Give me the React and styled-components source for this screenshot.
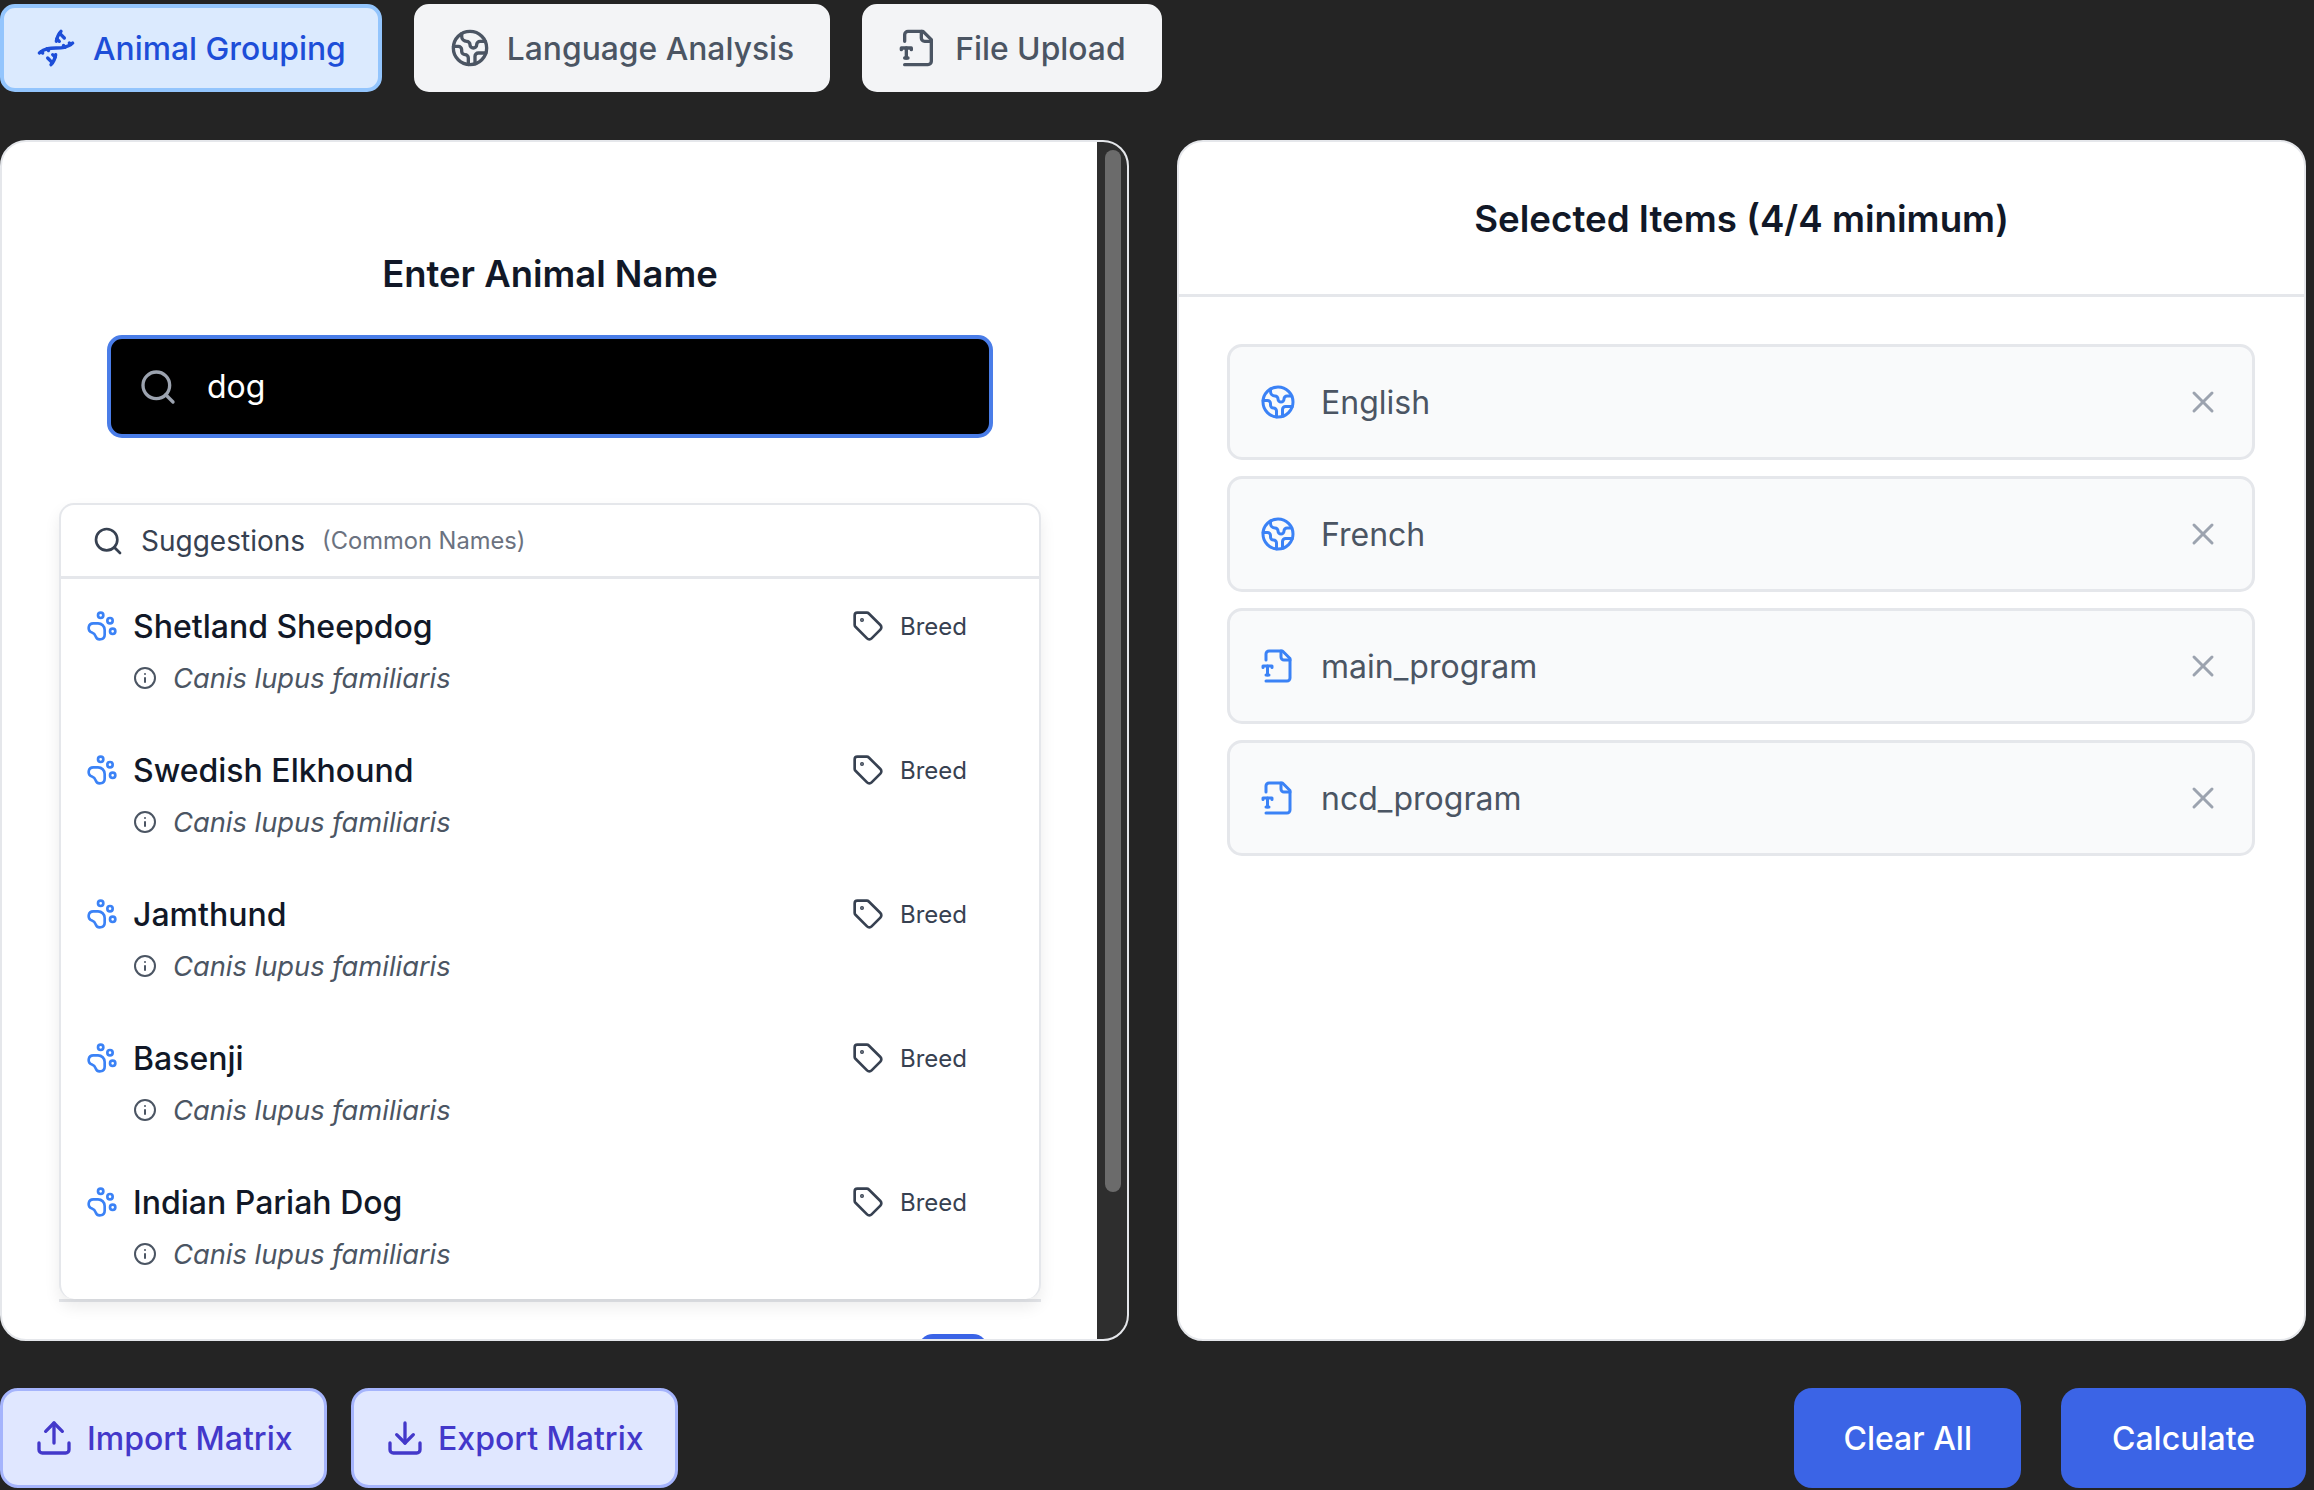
import React from "react";
import styled, { createGlobalStyle } from "styled-components";
import {
  Dna,
  Earth,
  Search,
  PawPrint,
  Info,
  Tag,
  X,
  Upload,
  Download,
} from "lucide-react";

const FileTypeIcon = ({ size = 24, color = "currentColor" }) => (
  <svg
    width={size}
    height={size}
    viewBox="0 0 24 24"
    fill="none"
    stroke={color}
    strokeWidth="2"
    strokeLinecap="round"
    strokeLinejoin="round"
  >
    <path d="M4 22h14a2 2 0 0 0 2-2V7l-5-5H6a2 2 0 0 0-2 2v4" />
    <path d="M14 2v4a2 2 0 0 0 2 2h4" />
    <path d="M2 13v-1h6v1" />
    <path d="M5 12v6" />
    <path d="M4 18h2" />
  </svg>
);

const suggestions = [
  "Shetland Sheepdog",
  "Swedish Elkhound",
  "Jamthund",
  "Basenji",
  "Indian Pariah Dog",
];

const selected = [
  { name: "English", Icon: Earth },
  { name: "French", Icon: Earth },
  { name: "main_program", Icon: FileTypeIcon },
  { name: "ncd_program", Icon: FileTypeIcon },
];

export default function App() {
  return (
    <Page>
      <GlobalStyle />
      <Tabs>
        <Tab $active>
          <Dna size={40} strokeWidth={2} />
          Animal Grouping
        </Tab>
        <Tab>
          <Earth size={40} strokeWidth={2} />
          Language Analysis
        </Tab>
        <Tab>
          <FileTypeIcon size={40} />
          File Upload
        </Tab>
      </Tabs>

      <Panels>
        <LeftPanel>
          <ScrollArea>
            <SearchTitle>Enter Animal Name</SearchTitle>
            <SearchBox>
              <Search size={40} color="#9ca3af" strokeWidth={2} />
              <span>dog</span>
            </SearchBox>
            <CardWrap>
              <Card>
                <CardHeader>
                  <Search size={32} color="#374151" strokeWidth={2} />
                  <span>Suggestions</span>
                  <small>(Common Names)</small>
                </CardHeader>
                {suggestions.map((name) => (
                  <Row key={name}>
                    <RowTop>
                      <RowName>
                        <PawPrint size={32} color="#3b82f6" strokeWidth={2} />
                        {name}
                      </RowName>
                      <RowTag>
                        <Tag size={32} color="#374151" strokeWidth={2} />
                        Breed
                      </RowTag>
                    </RowTop>
                    <RowSub>
                      <Info size={24} color="#4b5563" strokeWidth={2} />
                      <em>Canis lupus familiaris</em>
                    </RowSub>
                  </Row>
                ))}
              </Card>
            </CardWrap>
            <PeekButton />
          </ScrollArea>
          <Track>
            <Thumb />
          </Track>
        </LeftPanel>

        <RightPanel>
          <RightHeader>Selected Items (4/4 minimum)</RightHeader>
          <Items>
            {selected.map(({ name, Icon }) => (
              <Item key={name}>
                <ItemLabel>
                  <Icon size={36} color="#3b82f6" />
                  {name}
                </ItemLabel>
                <X size={36} color="#9ca3af" strokeWidth={2} />
              </Item>
            ))}
          </Items>
        </RightPanel>
      </Panels>

      <Footer>
        <FooterGroup>
          <MatrixButton>
            <Upload size={40} strokeWidth={2} />
            Import Matrix
          </MatrixButton>
          <MatrixButton>
            <Download size={40} strokeWidth={2} />
            Export Matrix
          </MatrixButton>
        </FooterGroup>
        <ActionGroup>
          <ActionButton>Clear All</ActionButton>
          <ActionButton $wide>Calculate</ActionButton>
        </ActionGroup>
      </Footer>
    </Page>
  );
}

const GlobalStyle = createGlobalStyle`
  html, body {
    margin: 0;
    background: #242424;
  }
  * {
    box-sizing: border-box;
  }
`;

const Page = styled.div`
  width: 2314px;
  height: 1490px;
  padding: 4px 8px 0 0;
  background: #242424;
  font-family: Inter, "Liberation Sans", sans-serif;
  overflow: hidden;
`;

const Tabs = styled.div`
  display: flex;
  gap: 32px;
  margin-bottom: 48px;
`;

const Tab = styled.button`
  display: flex;
  align-items: center;
  gap: 17px;
  height: 88px;
  padding: 0 32px;
  border-radius: 15px;
  font-family: inherit;
  font-size: 31.8px;
  font-weight: 500;
  border: 4px solid ${(p) => (p.$active ? "#93c5fd" : "#f3f4f6")};
  background: ${(p) => (p.$active ? "#dbeafe" : "#f3f4f6")};
  color: ${(p) => (p.$active ? "#1d4ed8" : "#4b5563")};
`;

const Panels = styled.div`
  display: grid;
  grid-template-columns: 1129px 1129px;
  gap: 48px;
  height: 1201px;
`;

const LeftPanel = styled.section`
  display: flex;
  border: 2px solid #e5e7eb;
  border-radius: 26px;
  background: #fff;
  overflow: hidden;
`;

const ScrollArea = styled.div`
  flex: 1;
  min-width: 0;
  display: flex;
  flex-direction: column;
  padding: 107px 56px 0 57px;
  overflow: hidden;
`;

const SearchTitle = styled.h2`
  margin: 0 0 36px;
  text-align: center;
  font-size: 36.4px;
  line-height: 50px;
  font-weight: 600;
  color: #111827;
`;

const SearchBox = styled.div`
  display: flex;
  flex: none;
  align-items: center;
  gap: 29px;
  height: 103px;
  margin: 0 48px 65px;
  padding: 0 27px;
  border: 4px solid #4a7de8;
  border-radius: 15px;
  background: #000;
  color: #fff;
  font-size: 32px;
`;

const CardWrap = styled.div`
  flex: none;
  border-bottom: 3px solid #e5e7eb;
`;

const Card = styled.div`
  border: 2px solid #e5e7eb;
  border-bottom: none;
  border-radius: 15px;
  background: #fff;
  box-shadow: 0 8px 16px rgba(0, 0, 0, 0.08);
`;

const CardHeader = styled.div`
  display: flex;
  align-items: center;
  height: 74px;
  padding-left: 31px;
  border-bottom: 3px solid #e5e7eb;
  color: #374151;
  font-size: 28px;

  span {
    margin-left: 17px;
  }

  small {
    margin-left: 17px;
    font-size: 23.7px;
    color: #6b7280;
  }
`;

const Row = styled.div`
  display: flex;
  flex-direction: column;
  gap: 8px;
  height: 144px;
  padding: 25px 72px 0 25px;
`;

const RowTop = styled.div`
  display: flex;
  align-items: center;
  justify-content: space-between;
  height: 44px;
`;

const RowName = styled.div`
  display: flex;
  align-items: center;
  gap: 15px;
  font-size: 32px;
  font-weight: 500;
  color: #111827;
`;

const RowTag = styled.div`
  display: flex;
  align-items: center;
  gap: 16px;
  font-size: 24px;
  color: #374151;
`;

const RowSub = styled.div`
  display: flex;
  align-items: center;
  gap: 16px;
  margin-left: 47px;
  height: 44px;
  font-size: 27.3px;
  color: #4b5563;
`;

const PeekButton = styled.div`
  flex: none;
  align-self: flex-end;
  width: 70px;
  height: 60px;
  margin: 32px 53px 0 0;
  border-radius: 15px;
  background: #3b64e6;
`;

const Track = styled.div`
  flex: none;
  width: 30px;
  padding: 8px 6px 0 8px;
  background: #2e2e2e;
`;

const Thumb = styled.div`
  height: 1042px;
  border-radius: 9px;
  background: #6b6b6b;
`;

const RightPanel = styled.section`
  border: 2px solid #e5e7eb;
  border-radius: 26px;
  background: #fff;
  overflow: hidden;
`;

const RightHeader = styled.h2`
  margin: 0;
  height: 155px;
  padding-top: 52px;
  text-align: center;
  border-bottom: 3px solid #e5e7eb;
  font-size: 36.7px;
  line-height: 50px;
  font-weight: 600;
  color: #111827;
`;

const Items = styled.div`
  display: flex;
  flex-direction: column;
  gap: 16px;
  padding: 47px 49px 47px 48px;
`;

const Item = styled.div`
  display: flex;
  align-items: center;
  justify-content: space-between;
  height: 116px;
  padding: 0 31px 0 30px;
  border: 3px solid #e5e7eb;
  border-radius: 15px;
  background: #f9fafb;
`;

const ItemLabel = styled.div`
  display: flex;
  align-items: center;
  gap: 25px;
  font-size: 32px;
  color: #4b5563;
`;

const Footer = styled.div`
  display: flex;
  justify-content: space-between;
  margin-top: 47px;
`;

const FooterGroup = styled.div`
  display: flex;
  gap: 24px;
`;

const MatrixButton = styled.button`
  display: flex;
  align-items: center;
  gap: 13px;
  width: 327px;
  height: 100px;
  padding: 0 0 0 31px;
  border: 3px solid #a5b4fc;
  border-radius: 18px;
  background: #e0e7ff;
  color: #4338ca;
  font-family: inherit;
  font-size: 32px;
  font-weight: 500;
`;

const ActionGroup = styled.div`
  display: flex;
  gap: 40px;
`;

const ActionButton = styled.button`
  height: 100px;
  padding: 0 ${(p) => (p.$wide ? "51px" : "49px")};
  border: none;
  border-radius: 18px;
  background: #3b64e6;
  color: #fff;
  font-family: inherit;
  font-size: 32px;
  font-weight: 500;
`;
